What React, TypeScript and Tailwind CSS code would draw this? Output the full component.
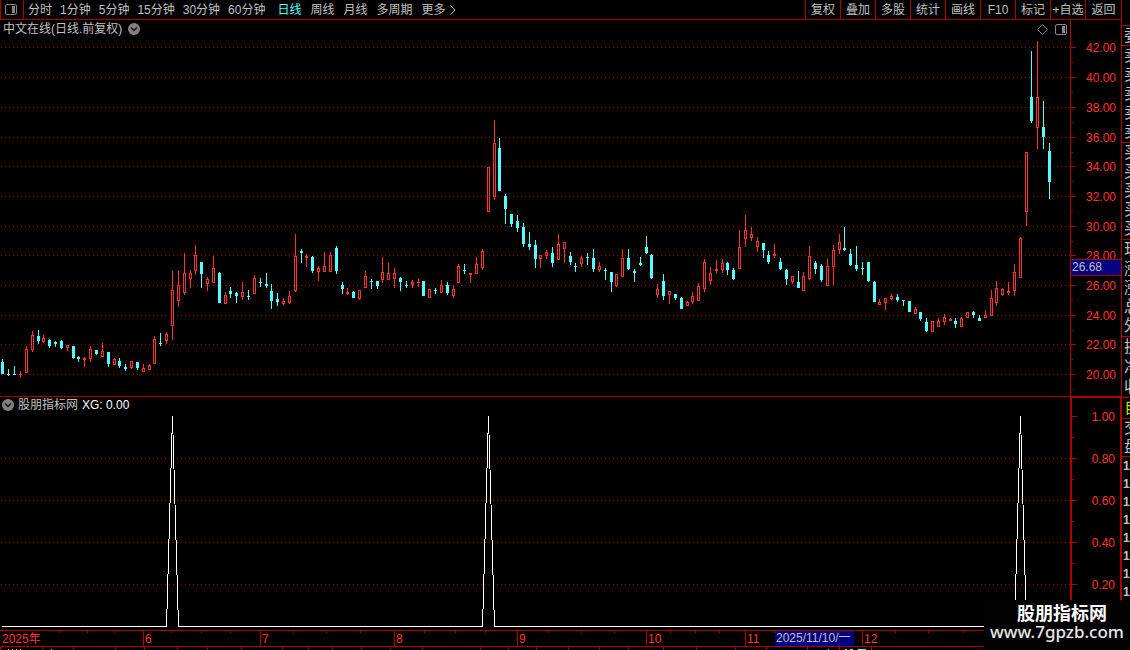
type Candle = [x: number, high: number, top: number, bottom: number, low: number, up: 0 | 1]

// Plot units: x along the plot, y from the top of the window area.
const CANDLES: Candle[] = [
  [2, 359, 362, 374, 374, 0], [8, 369, 374, 375, 376, 0], [14, 366, 374, 375, 375, 0],
  [20, 371, 374, 375, 377, 1], [26, 346, 349, 373, 373, 1], [32, 331, 335, 350, 352, 1],
  [38, 330, 336, 341, 344, 0], [43, 335, 338, 342, 343, 1], [49, 339, 340, 346, 348, 0],
  [55, 341, 342, 344, 347, 0], [61, 340, 341, 348, 349, 0], [67, 345, 345, 348, 351, 1],
  [73, 346, 346, 358, 359, 0], [78, 356, 357, 359, 362, 0], [84, 357, 358, 360, 367, 1],
  [90, 346, 349, 359, 362, 1], [96, 350, 350, 354, 355, 0], [102, 343, 351, 357, 357, 1],
  [108, 352, 352, 364, 367, 0], [114, 358, 359, 365, 365, 1], [119, 358, 361, 366, 368, 0],
  [125, 364, 367, 369, 371, 0], [131, 361, 361, 368, 369, 1], [137, 362, 362, 368, 370, 0],
  [143, 364, 368, 372, 372, 1], [149, 364, 365, 370, 370, 1], [154, 336, 339, 364, 364, 1],
  [160, 333, 343, 344, 346, 0], [166, 332, 334, 341, 344, 1], [172, 271, 290, 326, 340, 1],
  [178, 271, 285, 301, 307, 1], [184, 253, 273, 293, 295, 1], [190, 270, 273, 279, 288, 1],
  [195, 245, 255, 271, 275, 1], [201, 262, 262, 274, 288, 0], [207, 277, 279, 284, 291, 1],
  [213, 256, 268, 283, 283, 1], [219, 272, 273, 303, 303, 0], [225, 292, 295, 304, 304, 1],
  [230, 287, 291, 294, 298, 0], [236, 292, 293, 296, 303, 0], [242, 282, 292, 297, 300, 1],
  [248, 290, 296, 297, 300, 0], [254, 275, 278, 294, 294, 1], [260, 278, 282, 283, 287, 0],
  [266, 273, 284, 286, 288, 0], [271, 284, 291, 301, 309, 0], [277, 293, 299, 302, 306, 0],
  [283, 298, 301, 304, 305, 1], [289, 291, 296, 303, 304, 1], [295, 234, 256, 291, 292, 1],
  [301, 249, 251, 253, 263, 0], [306, 254, 256, 258, 267, 1], [312, 256, 257, 271, 273, 0],
  [318, 266, 268, 272, 281, 1], [324, 252, 266, 272, 272, 1], [330, 252, 255, 272, 272, 1],
  [336, 246, 248, 271, 274, 0], [342, 282, 285, 289, 294, 0], [347, 288, 292, 294, 295, 1],
  [353, 291, 292, 298, 298, 0], [359, 290, 290, 299, 300, 1], [365, 271, 276, 288, 288, 1],
  [371, 279, 281, 282, 289, 0], [377, 281, 281, 286, 289, 0], [382, 257, 272, 280, 283, 1],
  [388, 263, 273, 280, 280, 1], [394, 268, 273, 279, 288, 1], [400, 277, 278, 282, 291, 0],
  [406, 281, 285, 286, 288, 0], [412, 280, 282, 285, 288, 1], [418, 279, 282, 283, 287, 1],
  [423, 281, 281, 296, 296, 0], [429, 289, 289, 298, 298, 1], [435, 288, 290, 291, 294, 0],
  [441, 280, 285, 293, 293, 1], [447, 282, 285, 293, 295, 0], [453, 285, 289, 296, 298, 1],
  [458, 264, 266, 283, 283, 1], [464, 264, 270, 271, 274, 0], [470, 273, 273, 275, 283, 1],
  [476, 257, 264, 274, 274, 1], [482, 249, 251, 268, 270, 1], [488, 167, 167, 212, 212, 1],
  [494, 120, 143, 197, 200, 1], [499, 138, 148, 191, 191, 0], [505, 194, 196, 209, 224, 0],
  [511, 214, 214, 224, 227, 0], [517, 215, 221, 228, 232, 0], [523, 223, 227, 244, 247, 0],
  [529, 232, 244, 247, 250, 0], [535, 240, 245, 259, 268, 0], [540, 255, 255, 259, 268, 1],
  [546, 250, 252, 256, 259, 1], [552, 247, 253, 263, 267, 0], [558, 234, 244, 260, 260, 1],
  [564, 242, 242, 249, 263, 1], [570, 252, 256, 262, 265, 0], [575, 263, 266, 267, 272, 0],
  [581, 256, 258, 264, 267, 1], [587, 253, 257, 258, 265, 0], [593, 249, 258, 269, 272, 0],
  [599, 262, 266, 270, 272, 1], [605, 268, 270, 271, 280, 0], [611, 272, 272, 282, 292, 0],
  [616, 274, 274, 286, 287, 1], [622, 249, 258, 277, 277, 1], [628, 249, 258, 269, 270, 0],
  [634, 269, 271, 273, 282, 0], [640, 257, 263, 265, 266, 0], [646, 236, 247, 253, 254, 0],
  [651, 254, 255, 278, 279, 0], [657, 284, 289, 295, 298, 1], [663, 274, 281, 296, 300, 0],
  [669, 291, 291, 295, 304, 1], [675, 294, 294, 298, 300, 0], [681, 297, 298, 309, 309, 0],
  [687, 301, 302, 306, 306, 1], [692, 292, 296, 302, 304, 1], [698, 283, 286, 301, 301, 1],
  [704, 259, 262, 289, 292, 1], [710, 267, 273, 281, 285, 1], [716, 260, 269, 271, 273, 1],
  [722, 259, 263, 270, 273, 1], [727, 262, 263, 270, 275, 0], [733, 268, 270, 279, 280, 0],
  [739, 230, 247, 269, 269, 1], [745, 215, 230, 239, 247, 1], [751, 227, 234, 238, 241, 1],
  [757, 237, 241, 247, 252, 1], [763, 243, 243, 250, 258, 0], [768, 251, 255, 262, 264, 0],
  [774, 244, 254, 256, 258, 1], [780, 258, 262, 269, 270, 0], [786, 269, 270, 279, 285, 0],
  [792, 276, 276, 282, 284, 1], [798, 271, 282, 288, 288, 0], [803, 272, 276, 291, 291, 1],
  [809, 246, 256, 279, 280, 1], [815, 261, 263, 269, 274, 0], [821, 264, 266, 280, 282, 0],
  [827, 259, 266, 286, 286, 1], [833, 245, 250, 267, 285, 1], [839, 234, 242, 250, 254, 1],
  [844, 227, 248, 250, 251, 0], [850, 249, 254, 265, 266, 0], [856, 246, 265, 269, 271, 0],
  [862, 262, 268, 269, 275, 0], [868, 262, 262, 281, 282, 0], [874, 281, 282, 302, 302, 0],
  [879, 299, 302, 305, 305, 1], [885, 298, 298, 303, 310, 1], [891, 294, 296, 299, 300, 1],
  [897, 294, 297, 300, 302, 0], [903, 300, 300, 301, 306, 0], [909, 301, 301, 312, 312, 0],
  [915, 307, 309, 314, 314, 1], [920, 312, 312, 319, 321, 0], [926, 318, 322, 331, 332, 0],
  [932, 321, 321, 332, 332, 1], [938, 318, 321, 327, 327, 1], [944, 314, 317, 322, 325, 1],
  [950, 318, 319, 321, 321, 1], [955, 318, 321, 324, 328, 0], [961, 317, 318, 327, 327, 1],
  [967, 312, 312, 318, 318, 1], [973, 311, 312, 315, 318, 0], [979, 315, 318, 321, 321, 0],
  [985, 310, 315, 318, 318, 1], [991, 290, 298, 316, 316, 1], [996, 281, 288, 303, 306, 1],
  [1002, 288, 289, 295, 296, 1], [1008, 282, 291, 293, 295, 1], [1014, 264, 272, 291, 296, 1],
  [1020, 237, 238, 278, 278, 1], [1026, 152, 152, 212, 226, 1], [1031, 51, 97, 121, 123, 0],
  [1037, 41, 97, 128, 149, 1], [1043, 101, 127, 137, 149, 0], [1049, 143, 151, 182, 199, 0],
]

const PRICE_TICKS: [string, number][] = [
  ['42.00', 47], ['40.00', 77], ['38.00', 107], ['36.00', 137], ['34.00', 166], ['32.00', 196],
  ['30.00', 226], ['28.00', 255], ['26.00', 285], ['24.00', 315], ['22.00', 344], ['20.00', 374],
]

const SIGNAL_TICKS: [string, number][] = [
  ['1.00', 416], ['0.80', 458], ['0.60', 500], ['0.40', 542], ['0.20', 584],
]

const MINUTE_PERIODS = ['分时', '1分钟', '5分钟', '15分钟', '30分钟', '60分钟']
const DAY_PERIODS = ['日线', '周线', '月线', '多周期', '更多']
const ACTIONS = ['复权', '叠加', '多股', '统计', '画线', 'F10', '标记', '+自选', '返回']

const TIMELINE = 1121
const MONTHS: [string, number, number][] = [
  ['2025年', 0, 143], ['6', 143, 260], ['7', 260, 394], ['8', 394, 517],
  ['9', 517, 646], ['10', 646, 745], ['11', 745, 862], ['12', 862, TIMELINE],
]
const WEEK_TICKS = [59, 87, 114, 171, 201, 230, 293, 326, 360, 424, 455, 485, 548, 581, 614, 670, 695, 719, 774, 895, 928, 963]
const LOWER_TICKS = [0, 42, 73, 115, 144, 177, 207, 241, 282, 308, 332, 361, 390, 422, 480, 508, 536, 568, 599, 628, 663, 696, 735, 766, 807, 839, 871]

const percent = (value: number, total: number) => `${(value / total) * 100}%`

function PanelIcon() {
  return (
    <svg width="12" height="11" viewBox="0 0 12 11" aria-hidden="true" className="shrink-0">
      <rect x="0.5" y="0.5" width="11" height="10" rx="1.5" fill="none" stroke="#868686" />
      <rect x="7" y="2" width="3" height="7" fill="#868686" />
    </svg>
  )
}

function ChevronBadge() {
  return (
    <svg width="12" height="12" viewBox="0 0 12 12" aria-hidden="true" className="shrink-0">
      <circle cx="6" cy="6" r="6" fill="#808080" />
      <path d="M3 4.5l3 3 3-3" fill="none" stroke="#111" strokeWidth="1.5" />
    </svg>
  )
}

function GridLines({ ticks }: { ticks: number[] }) {
  return (
    <>
      {ticks.map((y) => (
        <line key={y} x1="1" x2="1070" y1={y + 0.5} y2={y + 0.5} stroke="#a00000" strokeDasharray="1 3" />
      ))}
    </>
  )
}

function CandleChart() {
  return (
    <svg
      viewBox="0 40 1070 356"
      preserveAspectRatio="none"
      shapeRendering="crispEdges"
      role="img"
      aria-label="日线"
      className="block min-h-0 w-full flex-1"
    >
      <GridLines ticks={PRICE_TICKS.map(([, y]) => y)} />
      {CANDLES.map(([x, high, top, bottom, low, up]) => (
        <g key={x} fill={up ? '#ff3232' : '#54ffff'}>
          <rect x={x} y={high} width="1" height={low - high} />
          <rect x={x - 1} y={top} width="3" height={bottom - top} />
          {up === 1 && bottom - top > 2 && (
            <rect x={x} y={top + 1} width="1" height={bottom - top - 2} fill="#000" />
          )}
        </g>
      ))}
    </svg>
  )
}

function SignalChart() {
  return (
    <svg
      viewBox="0 415 1070 215"
      preserveAspectRatio="none"
      shapeRendering="crispEdges"
      role="img"
      aria-label="XG"
      className="block min-h-0 w-full flex-1"
    >
      <GridLines ticks={SIGNAL_TICKS.slice(1).map(([, y]) => y)} />
      <polyline
        points="2,626.5 166.5,626.5 172.5,416 178.5,626.5 482.5,626.5 488.5,416 494.5,626.5 1014.5,626.5 1020.5,416 1026.5,626.5 1070,626.5"
        fill="none"
        stroke="#fff"
      />
    </svg>
  )
}

type AxisProps = {
  ticks: [string, number][]
  top: number
  height: number
  step: number
}

function Axis({ ticks, top, height, step }: AxisProps) {
  return (
    <svg className="block h-full w-full" shapeRendering="crispEdges">
      {ticks.map(([label, y]) => (
        <g key={label}>
          <rect x="0" y={percent(y - top, height)} width="5" height="1" fill="#b00000" />
          <rect x="0" y={percent(y - top + step / 2, height)} width="2" height="1" fill="#b00000" />
          <text x="100%" dx="-5" y={percent(y - top, height)} dy="5" textAnchor="end" fill="#ff3232">
            {label}
          </text>
        </g>
      ))}
    </svg>
  )
}

function Toolbar() {
  return (
    <header className="flex h-5 shrink-0 items-stretch justify-between border-b border-[#b00000]">
      <nav className="flex items-center">
        <button type="button" aria-label="侧栏" className="flex h-full w-6 items-center border-x border-[#b00000] pl-1">
          <PanelIcon />
        </button>
        <div className="flex items-center gap-2 pl-1">
          {MINUTE_PERIODS.map((period) => (
            <button key={period} type="button">
              {period}
            </button>
          ))}
        </div>
        <div className="flex items-center gap-[9px] pl-3">
          {DAY_PERIODS.map((period) => (
            <button key={period} type="button" className="first:text-[#54ffff]">
              {period}
            </button>
          ))}
        </div>
        <svg width="6" height="10" viewBox="0 0 6 10" aria-hidden="true" className="ml-1">
          <path d="M0.5 0.5L5 5L0.5 9.5" fill="none" stroke="#c0c0c0" />
        </svg>
      </nav>
      <div className="flex">
        {ACTIONS.map((action) => (
          <button
            key={action}
            type="button"
            className="w-[35px] whitespace-nowrap border-l border-[#b00000] text-center last:w-9"
          >
            {action}
          </button>
        ))}
      </div>
    </header>
  )
}

function TimeAxis() {
  return (
    <footer className="shrink-0">
      <div className="relative flex h-[17px] border-y border-[#b00000] text-[#ff3232]">
        {MONTHS.map(([label, from, to]) => (
          <div
            key={label}
            className="border-l border-[#b00000] pl-px leading-4 first:border-l-0 first:pl-0.5"
            style={{ width: percent(to - from, TIMELINE) }}
          >
            {label}
          </div>
        ))}
        <svg className="absolute inset-x-0 top-0 h-0.5 w-full" shapeRendering="crispEdges">
          {WEEK_TICKS.map((x) => (
            <rect key={x} x={percent(x, TIMELINE)} y="0" width="1" height="2" fill="#b00000" />
          ))}
        </svg>
        <div
          className="absolute top-0 h-[15px] w-[79px] whitespace-nowrap bg-[#000080] pl-px leading-[15px] text-[#c0c0c0]"
          style={{ left: percent(775, TIMELINE) }}
        >
          2025/11/10/一
        </div>
      </div>
      <svg className="block h-[3px] w-full" shapeRendering="crispEdges">
        {LOWER_TICKS.map((x) => (
          <rect key={x} x={percent(x, TIMELINE)} y="0" width="1" height="3" fill="#b00000" />
        ))}
        <path d="M8 2.5h1m3 0h1m3 0h1m3 0h1m30 0h1M828 2.5h1" stroke="#c0c0c0" />
        <path d="M845 2.5h2m3 0h3m5 0h8" stroke="#54ffff" />
      </svg>
    </footer>
  )
}

function QuoteRows({ rows, className }: { rows: string[]; className: string }) {
  return (
    <div className={`flex shrink-0 flex-col border-b border-[#b00000] ${className}`}>
      {rows.map((row, index) => (
        <div key={index} className="flex flex-1 items-center pl-0.5 text-base leading-4">
          {row}
        </div>
      ))}
    </div>
  )
}

// Quote panel, mostly off the right edge of the window.
function QuotePanel() {
  return (
    <aside className="flex w-[9px] shrink-0 flex-col overflow-hidden whitespace-nowrap border-l border-[#b00000]">
      <QuoteRows rows={[]} className="h-[26px]" />
      <QuoteRows rows={['委']} className="h-5" />
      <QuoteRows rows={['卖', '卖', '卖', '卖', '卖']} className="h-[97px]" />
      <QuoteRows rows={['买', '买', '买', '买', '买']} className="h-[97px]" />
      <QuoteRows rows={['现', '涨', '涨', '总', '外']} className="h-[97px]" />
      <QuoteRows rows={['换', '净', '收']} className="h-[61px]" />
      <QuoteRows rows={['自']} className="h-[21px] text-[#d8d800]" />
      <QuoteRows rows={['交', '盘']} className="h-[38px]" />
      {Array.from({ length: 8 }, (_, index) => (
        <div key={index} className="h-[18px] shrink-0 pl-px text-xs font-bold leading-[18px]">
          1
        </div>
      ))}
    </aside>
  )
}

export default function App() {
  return (
    <div className="relative flex h-screen overflow-hidden bg-black font-['Liberation_Sans','Noto_Sans_CJK_SC',sans-serif] text-xs text-[#c0c0c0]">
      <main className="flex min-w-0 flex-1 flex-col">
        <Toolbar />

        <section className="flex min-h-0 flex-[376_1_0%]">
          <div className="flex min-w-0 flex-1 flex-col">
            <div className="flex h-5 shrink-0 items-center justify-between px-[3px] pb-0.5">
              <h1 className="flex items-center gap-1.5">
                中文在线(日线.前复权)
                <ChevronBadge />
              </h1>
              <div className="flex items-center gap-[7px]">
                <svg width="11" height="11" viewBox="0 0 11 11" aria-hidden="true">
                  <path d="M5.5 0.5l5 5-5 5-5-5z" fill="none" stroke="#808080" />
                </svg>
                <PanelIcon />
              </div>
            </div>
            <CandleChart />
          </div>
          <div className="relative w-[51px] shrink-0 border-l border-[#b00000]">
            <Axis ticks={PRICE_TICKS} top={20} height={376} step={30} />
            <div
              className="absolute inset-x-0 h-[17px] border-y border-[#b00000] bg-[#000080] pl-px leading-[15px]"
              style={{ top: percent(239, 376) }}
            >
              26.68
            </div>
          </div>
        </section>

        <section className="flex min-h-0 flex-[234_1_0%]">
          <div className="flex min-w-0 flex-1 flex-col border-t border-[#b00000]">
            <h2 className="flex h-[18px] shrink-0 items-center pb-0.5 pl-0.5">
              <ChevronBadge />
              <span className="ml-1">股朋指标网</span>
              <span className="ml-1 text-white">XG: 0.00</span>
            </h2>
            <SignalChart />
          </div>
          <div className="w-[51px] shrink-0 border-l-2 border-r border-t-2 border-[#b00000]">
            <Axis ticks={SIGNAL_TICKS} top={398} height={232} step={42} />
          </div>
        </section>

        <TimeAxis />
      </main>

      <QuotePanel />

      <div className="absolute bottom-0 right-0 flex h-[50px] w-[146px] flex-col items-center bg-[#020202] pt-1 text-white">
        <p className="pl-2.5 text-lg font-bold leading-5">股朋指标网</p>
        <a href="#" className="font-['Noto_Sans',sans-serif] text-[17px] font-medium leading-4 text-[#e8e8e8]">
          www.7gpzb.com
        </a>
      </div>
    </div>
  )
}
